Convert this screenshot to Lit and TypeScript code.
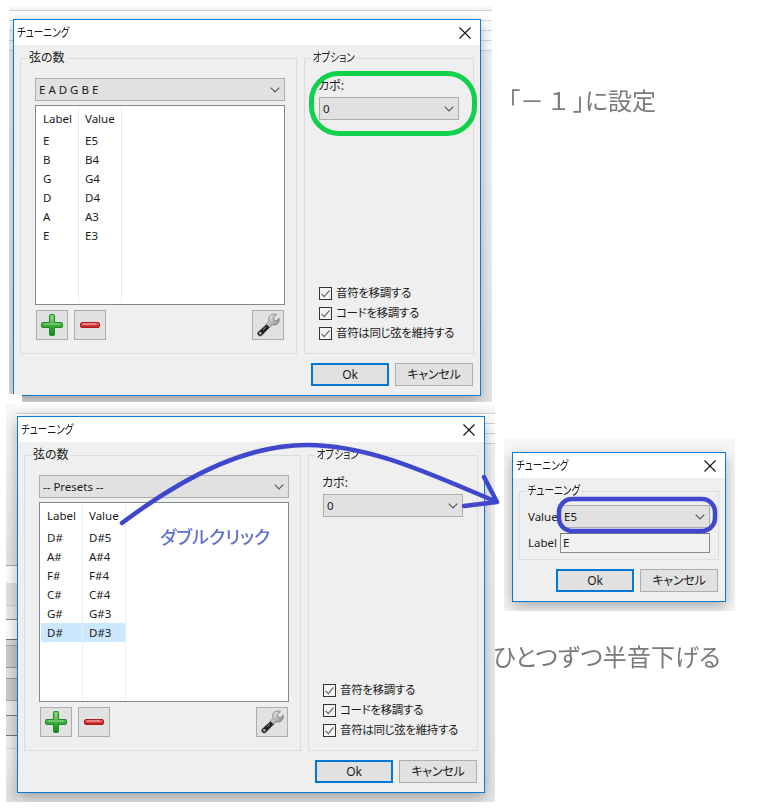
import { LitElement, html, css, svg } from "lit";
import { customElement, property } from "lit/decorators.js";
import { classMap } from "lit/directives/class-map.js";

const closeIcon = html`<svg class="close" width="12" height="12" viewBox="0 0 12 12"><path d="M.5.5l11 11M11.5.5l-11 11" stroke="#111" stroke-width="1.1" fill="none"/></svg>`;
const chevron = html`<svg class="chev" width="10" height="6" viewBox="0 0 10 6"><path d="M.7.7L5 5 9.300.7" stroke="#555" stroke-width="1.100" fill="none"/></svg>`;
const tick = html`<svg width="13" height="13" viewBox="0 0 13 13"><path d="M2.500 6.800l2.800 2.800 5.200-6.200" stroke="#666" stroke-width="1.200" fill="none"/></svg>`;

const plusIcon = html`<svg width="22" height="22" viewBox="0 0 22 22">
  <defs><linearGradient id="pg" x1="0" y1="0" x2="0" y2="1"><stop offset="0" stop-color="#7fd06f"/><stop offset=".5" stop-color="#3fae3a"/><stop offset="1" stop-color="#128a1c"/></linearGradient></defs>
  <path d="M8.500 1.500A1 1 0 0 1 9.500.5h3a1 1 0 0 1 1 1v7h7a1 1 0 0 1 1 1v3a1 1 0 0 1-1 1h-7v7a1 1 0 0 1-1 1h-3a1 1 0 0 1-1-1v-7h-7a1 1 0 0 1-1-1v-3a1 1 0 0 1 1-1h7z" fill="url(#pg)" stroke="#1f8a28" stroke-width="1"/>
  <path d="M3 10h16M11 3v5" stroke="#b9e9ac" stroke-width="1" opacity=".75"/>
</svg>`;
const minusIcon = html`<svg width="20" height="6" viewBox="0 0 20 6">
  <defs><linearGradient id="mg" x1="0" y1="0" x2="0" y2="1"><stop offset="0" stop-color="#e86a6a"/><stop offset=".6" stop-color="#d63a3a"/><stop offset="1" stop-color="#b01818"/></linearGradient></defs>
  <rect x=".5" y=".5" width="19" height="5" rx="1.500" fill="url(#mg)" stroke="#a81c1c"/>
  <path d="M3 2h13" stroke="#f5b0b0" stroke-width="1"/>
</svg>`;
const wrenchIcon = html`<svg width="24" height="24" viewBox="0 0 24 24">
  <defs><linearGradient id="wg" x1="0" y1="0" x2="1" y2="1"><stop offset="0" stop-color="#fff"/><stop offset="1" stop-color="#7c7c7c"/></linearGradient></defs>
  <path d="M15.500 1.500c2-.7 4-.4 5 .2l-3.200 2.700.6 2.600 2.500 1 2.700-2.700c.4 2-.2 4.300-1.700 5.500-1.500 1.300-3.600 1.500-5.300.9l-2.800 3-3.300-3.300 3-3c-.7-2.600.2-5.800 2-6.900z" fill="url(#wg)" stroke="#777" stroke-width=".8"/>
  <path d="M10.500 11.500l3 3-7.500 7.800c-1 1-2.600 1-3.600 0-1-1-1-2.500 0-3.500z" fill="#222" stroke="#555" stroke-width=".6"/>
  <circle cx="4.300" cy="20.200" r="1.200" fill="#bbb"/>
  <path d="M7 17l3-3" stroke="#888" stroke-width="1"/>
</svg>`;

const combo = (text: string, cls = "") => html`<div class="combo ${cls}"><span>${text}</span>${chevron}</div>`;
const button = (text: string, primary = false) =>
  html`<div class=${classMap({ btn: true, primary })}>${text}</div>`;

const shared = css`
  :host { display: block; position: absolute; }
  .win {
    box-sizing: border-box; border: 1px solid #0a7bd4; background: #efefef;
    box-shadow: 0 5px 14px rgba(0, 0, 0, 0.32);
    font: 11.5px/16px "Noto Sans", "Noto Sans CJK JP", sans-serif; color: #1a1a1a;
    font-feature-settings: "palt"; display: flex; flex-direction: column; height: 100%;
  }
  .title {
    height: 25px; flex: none; background: #fff; display: flex; align-items: center;
    justify-content: space-between; padding: 0 9px 0 3px; font-size: 12px;
  }
  .narrow { display: inline-block; transform: scaleX(0.8); transform-origin: left center; }
  .group { box-sizing: border-box; position: relative; border: 1px solid #dcdcdc; display: flex; flex-direction: column; }
  .legend { position: absolute; top: -9px; left: 6px; padding: 0 2px; background: #efefef; font-size: 12px; white-space: nowrap; }
  .combo {
    box-sizing: border-box; height: 23px; flex: none; background: #e1e1e1; border: 1px solid #adadad;
    display: flex; align-items: center; justify-content: space-between; padding: 0 4px 0 3px;
  }
  .btn {
    box-sizing: border-box; width: 78px; height: 23px; background: #e1e1e1; border: 1px solid #adadad;
    display: flex; align-items: center; justify-content: center; font-size: 12px; letter-spacing: -0.2px;
  }
  .btn.primary { border: 2px solid #0078d7; }
  .footer { display: flex; justify-content: flex-end; gap: 6px; padding-right: 7px; }
`;

interface Row { label: string; value: string; }

@customElement("tuning-dialog")
class TuningDialog extends LitElement {
  @property() preset = "";
  @property({ type: Array }) rows: Row[] = [];
  @property({ type: Number }) selected = -1;

  static styles = [shared, css`
    :host { width: 468px; height: 377px; }
    .body { display: flex; gap: 7px; padding: 13px 6px 0; }
    .strings { width: 277px; height: 296px; padding: 19px 11px 0 14px; }
    .options { width: 170px; height: 296px; padding: 20px 14px 12px; }
    .list {
      box-sizing: border-box; height: 200px; margin-top: 4px; background: #fff; border: 1px solid #828790;
      display: flex; padding: 0 0 2px 1px;
    }
    .col { box-sizing: border-box; width: 43px; border-right: 1px solid #e4edf8; flex: none; }
    .col:first-child { width: 42px; }
    .head { height: 25px; padding: 5px 0 0 6px; box-sizing: border-box; }
    .cell { height: 19px; line-height: 19px; padding-left: 6px; }
    .cell.sel { background: #cce8ff; }
    .tools { display: flex; gap: 6px; margin-top: 5px; padding: 0 1px; }
    .tool {
      box-sizing: border-box; width: 32px; height: 30px; background: #e1e1e1; border: 1px solid #adadad;
      display: flex; align-items: center; justify-content: center;
    }
    .tool.end { margin-left: auto; }
    .capo { margin-left: -1px; height: 18px; line-height: 14px; font-size: 12px; }
    .checks { margin-top: auto; display: flex; flex-direction: column; gap: 4px; }
    .check { display: flex; align-items: center; gap: 4px; height: 16px; white-space: nowrap; letter-spacing: -0.35px; }
    .box { box-sizing: border-box; width: 13px; height: 13px; border: 1px solid #333; background: #f4f4f4; display: flex; flex: none; }
    .box svg { margin: -1px; flex: none; }
    .footer { margin-top: 9px; }
  `];

  render() {
    const cols: [string, keyof Row][] = [["Label", "label"], ["Value", "value"]];
    return html`<div class="win">
      <div class="title"><span class="narrow">チューニング</span>${closeIcon}</div>
      <div class="body">
        <div class="group strings">
          <span class="legend">弦の数</span>
          ${combo(this.preset)}
          <div class="list">
            ${cols.map(([h, key]) => html`<div class="col">
              <div class="head">${h}</div>
              ${this.rows.map((r, i) => html`<div class=${classMap({ cell: true, sel: i === this.selected })}>${r[key]}</div>`)}
            </div>`)}
          </div>
          <div class="tools">
            <div class="tool">${plusIcon}</div>
            <div class="tool">${minusIcon}</div>
            <div class="tool end">${wrenchIcon}</div>
          </div>
        </div>
        <div class="group options">
          <span class="legend narrow">オプション</span>
          <div class="capo">カポ:</div>
          ${combo("0")}
          <div class="checks">
            ${["音符を移調する", "コードを移調する", "音符は同じ弦を維持する"].map(
              (t) => html`<div class="check"><span class="box">${tick}</span><span>${t}</span></div>`
            )}
          </div>
        </div>
      </div>
      <div class="footer">${button("Ok", true)}${button("キャンセル")}</div>
    </div>`;
  }
}

@customElement("note-dialog")
class NoteDialog extends LitElement {
  static styles = [shared, css`
    :host { width: 214px; height: 150px; }
    .body { padding: 13px 6px 0; }
    .group { height: 69px; padding: 13px 8px 0; display: grid; grid-template-columns: 31px 150px; column-gap: 1px; row-gap: 5px; grid-template-rows: 23px 20px; align-items: center; }
    .input { box-sizing: border-box; height: 20px; border: 1px solid #8a8a8a; border-top-color: #777; background: #f2f2f2; padding-left: 2px; line-height: 18px; }
    .footer { margin-top: 9px; }
  `];
  render() {
    return html`<div class="win">
      <div class="title"><span class="narrow">チューニング</span>${closeIcon}</div>
      <div class="body">
        <div class="group">
          <span class="legend narrow">チューニング</span>
          <span>Value</span>${combo("E5")}
          <span>Label</span><div class="input">E</div>
        </div>
      </div>
      <div class="footer">${button("Ok", true)}${button("キャンセル")}</div>
    </div>`;
  }
}

const std: Row[] = [
  { label: "E", value: "E5" }, { label: "B", value: "B4" }, { label: "G", value: "G4" },
  { label: "D", value: "D4" }, { label: "A", value: "A3" }, { label: "E", value: "E3" },
];
const flat: Row[] = [
  { label: "D#", value: "D#5" }, { label: "A#", value: "A#4" }, { label: "F#", value: "F#4" },
  { label: "C#", value: "C#4" }, { label: "G#", value: "G#3" }, { label: "D#", value: "D#3" },
];

@customElement("app-root")
class AppRoot extends LitElement {
  static styles = css`
    :host { display: block; }
    .canvas { position: relative; width: 768px; height: 808px; background: #fff; overflow: hidden; font-family: "Noto Sans CJK JP", sans-serif; }
    .paper { position: absolute; overflow: hidden; }
    .p1 {
      left: 9px; top: 6px; width: 483px; height: 396px;
      clip-path: polygon(0 0, 100% 0, 100% 100%, 13px 100%, 13px 388px, 0 388px);
      background: linear-gradient(#fafafa 0, #f2f2f2 4px, #cfcfcf 4px, #cfcfcf 5px, #fff 5px, #fff 14px, #d8d8d8 14px, #d8d8d8 15px, #fff 15px, #fff 24px, #d8d8d8 24px, #d8d8d8 25px, #fff 25px, #fff 34px, #d8d8d8 34px, #d8d8d8 35px, #fff 35px, #fff 44px, #d8d8d8 44px, #d8d8d8 45px, #f6f6f6 45px, #e6e6e6 100%);
    }
    .p2 {
      left: 6px; top: 404px; width: 489px; height: 398px;
      background:
        linear-gradient(#f6f6f6 40px, #e6e6e6 161px, #aaa 161px, #aaa 162px, #fff 162px, #fff 179px, #e4e4e4 179px, #e4e4e4 201px, #d0d0d0 201px, #d0d0d0 202px, #ececec 202px, #ececec 215px, #888 215px, #888 216px, #fff 216px, #fff 235px, #777 235px, #777 236px, #ddd 236px, #ddd 241px, #aaa 241px, #aaa 242px, #cdcdcd 242px, #cdcdcd 263px, #999 263px, #999 264px, #e2e2e2 264px, #e2e2e2 274px, #999 274px, #999 275px, #cdcdcd 275px, #cdcdcd 296px, #aaa 296px, #aaa 297px, #eee 297px, #eee 311px, #777 311px, #777 312px, #e2e2e2 312px, #e2e2e2 331px, #777 331px, #777 332px, #f0f0f0 332px, #f0f0f0 344px, #ddd 344px, #ddd 345px, #f4f4f4 345px, #e0e0e0 100%) 0 0 / 11px 100% no-repeat,
        linear-gradient(#fbfbfb 0, #f2f2f2 9px, #cfcfcf 9px, #cfcfcf 10px, #fff 10px, #fff 19px, #d4d4d4 19px, #d4d4d4 20px, #fff 20px, #fff 29px, #d4d4d4 29px, #d4d4d4 30px, #fff 30px, #fff 39px, #d4d4d4 39px, #d4d4d4 40px, #f6f6f6 40px, #e8e8e8 100%);
    }
    .p3 { left: 504px; top: 438px; width: 231px; height: 173px; background: #f7f7f7; }
    .d1 { left: 4px; top: 13px; }
    .d2 { left: 11px; top: 12px; }
    .d3 { left: 8px; top: 14px; }
    .note { position: absolute; color: #7a7a7a; font-size: 24px; line-height: 30px; white-space: nowrap; font-feature-settings: "palt"; filter: blur(0.3px); }
    .n1 { left: 508px; top: 85px; }
    .n2 { left: 493px; top: 641px; letter-spacing: 0.1px; }
    .n3 { left: 160px; top: 522px; color: #5f72cc; font-size: 18px; line-height: 28px; font-weight: 500; }
    .marks { position: absolute; left: 0; top: 0; pointer-events: none; }
  `;

  render() {
    return html`<div class="canvas">
      <div class="paper p1"><tuning-dialog class="d1" preset="E A D G B E" .rows=${std}></tuning-dialog></div>
      <div class="paper p2"><tuning-dialog class="d2" preset="-- Presets --" .rows=${flat} .selected=${5}></tuning-dialog></div>
      <div class="paper p3"><note-dialog class="d3"></note-dialog></div>
      <span class="note n1">「－ １ 」に設定</span>
      <span class="note n2">ひとつずつ半音下げる</span>
      <span class="note n3">ダブルクリック</span>
      <svg class="marks" width="768" height="808" viewBox="0 0 768 808" fill="none">
        ${svg`
          <rect x="311.500" y="73.500" width="163" height="60" rx="27" stroke="#0fd14b" stroke-width="5"/>
          <rect x="559" y="499" width="156" height="32" rx="13" stroke="#3f48cc" stroke-width="4.500"/>
          <path d="M122 523C190 472 250 445 307 445C370 445 430 474 497 502L484 477M497 502L464 506" stroke="#3f48cc" stroke-width="4.500" stroke-linecap="round" stroke-linejoin="round"/>
        `}
      </svg>
    </div>`;
  }
}
